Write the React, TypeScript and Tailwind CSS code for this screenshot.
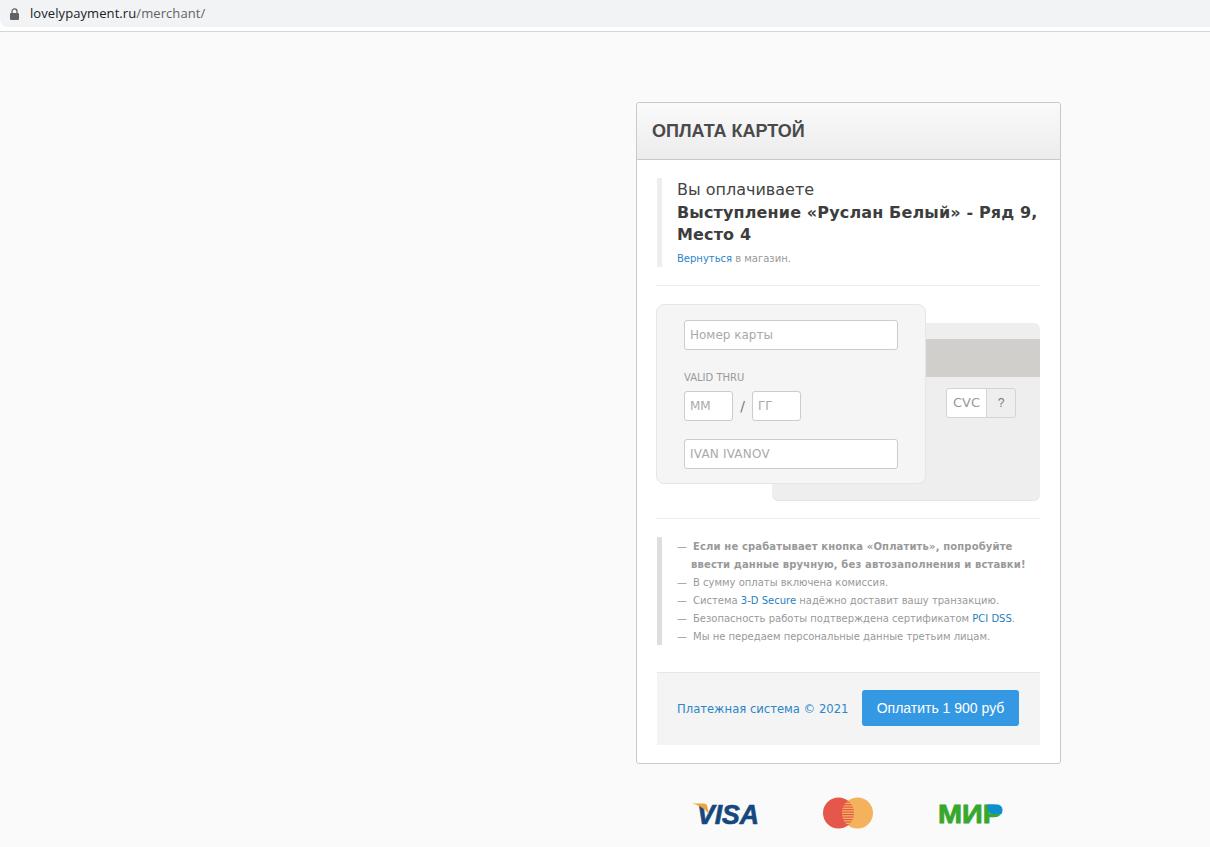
import { Fragment } from 'react';

const notes = [
  { bold: true, parts: ['Если не срабатывает кнопка «Оплатить», попробуйте'] },
  { bold: true, indent: true, parts: ['ввести данные вручную, без автозаполнения и вставки!'] },
  { parts: ['В сумму оплаты включена комиссия.'] },
  { parts: ['Система ', { link: '3-D Secure' }, ' надёжно доставит вашу транзакцию.'] },
  { parts: ['Безопасность работы подтверждена сертификатом ', { link: 'PCI DSS' }, '.'] },
  { parts: ['Мы не передаем персональные данные третьим лицам.'] },
];

function AddressBar() {
  return (
    <div className="h-[32px] bg-white border-b border-[#d6d6d6]">
      <div className="h-[27px] bg-[#f1f3f4] flex items-center pl-[10px] rounded-bl-[8px]">
        <svg width="9" height="12" viewBox="0 0 9 12" className="mr-[11px]">
          <path d="M2 5V3.4a2.5 2.5 0 0 1 5 0V5" fill="none" stroke="#5f6368" strokeWidth="1.3" />
          <rect x="0" y="5" width="9" height="7" rx="1" fill="#5f6368" />
        </svg>
        <span className="font-['Open_Sans',sans-serif] text-[13px] tracking-[0.08px] leading-none text-[#202124]">
          lovelypayment.ru<span className="text-[#5f6368]">/merchant/</span>
        </span>
      </div>
    </div>
  );
}

function CardForm() {
  return (
    <div className="grid mt-[18px]">
      <div className="col-start-1 row-start-1 ml-[116px] mt-[19px] w-[268px] h-[178px] bg-[#eeeeee] rounded-[6px] border-b border-[#e6e6e6] pt-[16px]">
        <div className="h-[38px] bg-[#d0cfcb]" />
        <div className="flex justify-end mt-[11px] pr-[24px]">
          <div className="flex h-[30px] w-[70px] rounded-[3px] border border-[#d4d4d4] text-[13px] text-[#999]">
            <span className="w-[40px] bg-white border-r border-[#d4d4d4] rounded-l-[3px] flex items-center justify-center">CVC</span>
            <span className="flex-1 flex items-center justify-center text-[#777] text-[12px] font-['Liberation_Sans',sans-serif]">?</span>
          </div>
        </div>
      </div>
      <div className="col-start-1 row-start-1 relative self-start w-[270px] h-[180px] bg-[#f5f5f5] border border-[#e6e6e6] rounded-[8px] pl-[27px] pt-[15px]">
        <input
          readOnly
          placeholder="Номер карты"
          className="block w-[214px] h-[30px] bg-white border border-[#cccccc] rounded-[3px] px-[5px] text-[12px] placeholder:text-[#aaaaaa] outline-none"
        />
        <div className="mt-[22px] text-[10px] leading-[12px] text-[#999]">VALID THRU</div>
        <div className="flex items-center mt-[7px]">
          <input
            readOnly
            placeholder="ММ"
            className="block w-[49px] h-[30px] bg-white border border-[#cccccc] rounded-[3px] px-[5px] text-[12px] placeholder:text-[#aaaaaa] outline-none"
          />
          <span className="w-[19px] text-center text-[14px] text-[#777]">/</span>
          <input
            readOnly
            placeholder="ГГ"
            className="block w-[49px] h-[30px] bg-white border border-[#cccccc] rounded-[3px] px-[5px] text-[12px] placeholder:text-[#aaaaaa] outline-none"
          />
        </div>
        <input
          readOnly
          placeholder="IVAN IVANOV"
          className="block mt-[18px] w-[214px] h-[30px] bg-white border border-[#cccccc] rounded-[3px] px-[5px] text-[12px] tracking-[0.2px] placeholder:text-[#aaaaaa] outline-none"
        />
      </div>
    </div>
  );
}

function Logos() {
  return (
    <div className="flex justify-center items-center gap-[65px] mt-[33px] h-[32px] pr-px">
      {/* Visa */}
      <svg width="72" height="34" viewBox="0 0 72 34" className="-mr-[6px]">
        <text x="5" y="27.500" fontFamily="Liberation Sans" fontWeight="700" fontStyle="italic" fontSize="28" textLength="62" lengthAdjust="spacingAndGlyphs" stroke="#15487f" strokeWidth="0.7" fill="#15487f">VISA</text>
        <path d="M0 7.500h12c1.500 0 2.500 1 3 2l2 9C14 13.500 8 9.500 0 7.500z" fill="#f0a33a" />
      </svg>
      {/* Mastercard */}
      <svg width="50" height="32" viewBox="0 0 50 32">
        <clipPath id="mc-overlap">
          <circle cx="15.500" cy="16" r="15.500" />
        </clipPath>
        <circle cx="15.500" cy="16" r="15.500" fill="#e5574a" />
        <circle cx="34.500" cy="16" r="15.500" fill="#f3b25b" />
        <g clipPath="url(#mc-overlap)">
          <circle cx="34.500" cy="16" r="15.500" fill="#f3b25b" />
          {[4.500, 7, 9.500, 12, 14.500, 17, 19.500, 22, 24.500, 27].map((y) => (
            <rect key={y} x="19" y={y} width="12" height="1.200" fill="#e5574a" />
          ))}
        </g>
      </svg>
      {/* МИР */}
      <svg width="66" height="32" viewBox="0 0 66 32">
        <text x="0" y="25.500" fontFamily="Liberation Sans" fontWeight="700" fontSize="25" textLength="64" lengthAdjust="spacingAndGlyphs" stroke="#37a72e" strokeWidth="0.8" fill="#37a72e">МИР</text>
        <path d="M49 7.500h10c3.500 0 5.500 2.500 5.500 5.500 0 1.500-.5 3-1 4H54c-2.500 0-4.500-3-5-9.500z" fill="#0f8fce" />
      </svg>
    </div>
  );
}

export default function App() {
  return (
    <div className="min-h-[847px] bg-[#fafafa] font-['DejaVu_Sans',sans-serif]">
      <AddressBar />

      <div className="ml-[636px] mt-[70px] w-[425px]">
        <div className="bg-white border border-[#c9c9c9] rounded-[3px] pb-[18px]">
          <div className="h-[57px] flex items-center pl-[15px] border-b border-[#c9c9c9] rounded-t-[3px] bg-gradient-to-b from-[#fafafa] to-[#ececec]">
            <h1 className="font-['Liberation_Sans',sans-serif] font-bold text-[18px] text-[#4a4a4a]">ОПЛАТА КАРТОЙ</h1>
          </div>

          <div className="pl-[19px] pr-[20px] pt-[18px]">
            {/* Order */}
            <div className="border-l-[5px] border-[#eeeeee] pl-[15px] h-[89px] ml-px">
              <div className="text-[16px] leading-[22px] text-[#444] pt-px">Вы оплачиваете</div>
              <div className="text-[16px] leading-[22px] font-bold text-[#3d3d3d] whitespace-nowrap tracking-[0.14px] mt-px">Выступление «Руслан Белый» - Ряд 9,</div>
              <div className="text-[16px] leading-[22px] font-bold text-[#3d3d3d] tracking-[0.14px]">Место 4</div>
              <div className="mt-[6px] text-[10px] leading-[14px] text-[#999]">
                <a className="text-[#2a85c9]">Вернуться</a> в магазин.
              </div>
            </div>
            <div className="h-px bg-[#ececec] mt-[18px]" />

            <CardForm />

            <div className="h-px bg-[#ececec] mt-[17px]" />

            {/* Notes */}
            <div className="mt-[18px] ml-px border-l-[5px] border-[#dedede] pl-[15px] h-[108px] pt-px text-[10px] leading-[18px] text-[#999]">
              {notes.map((n, i) => (
                <div key={i} className={`flex whitespace-nowrap ${n.bold ? 'font-bold tracking-[0.15px]' : ''}`}>
                  <span className={`font-normal ${n.indent ? 'w-[14px]' : 'w-[16px]'}`}>{n.indent ? '' : '—'}</span>
                  <span>
                    {n.parts.map((p, j) => (
                      <Fragment key={j}>
                        {typeof p === 'string' ? p : <a className="text-[#2a7fc0]">{p.link}</a>}
                      </Fragment>
                    ))}
                  </span>
                </div>
              ))}
            </div>

            {/* Footer */}
            <div className="mt-[27px] ml-px h-[73px] bg-[#f4f4f4] border-t border-[#e6e6e6] flex items-center pl-[20px] pb-[2px]">
              <span className="text-[11.6px] text-[#2a85c9] w-[185px] whitespace-nowrap mt-[4px]">Платежная система © 2021</span>
              <button className="w-[157px] h-[36px] bg-[#3498e3] rounded-[3px] text-white text-[14px] font-['Liberation_Sans',sans-serif]">
                Оплатить 1 900 руб
              </button>
            </div>
          </div>
        </div>

        <Logos />
      </div>
    </div>
  );
}
